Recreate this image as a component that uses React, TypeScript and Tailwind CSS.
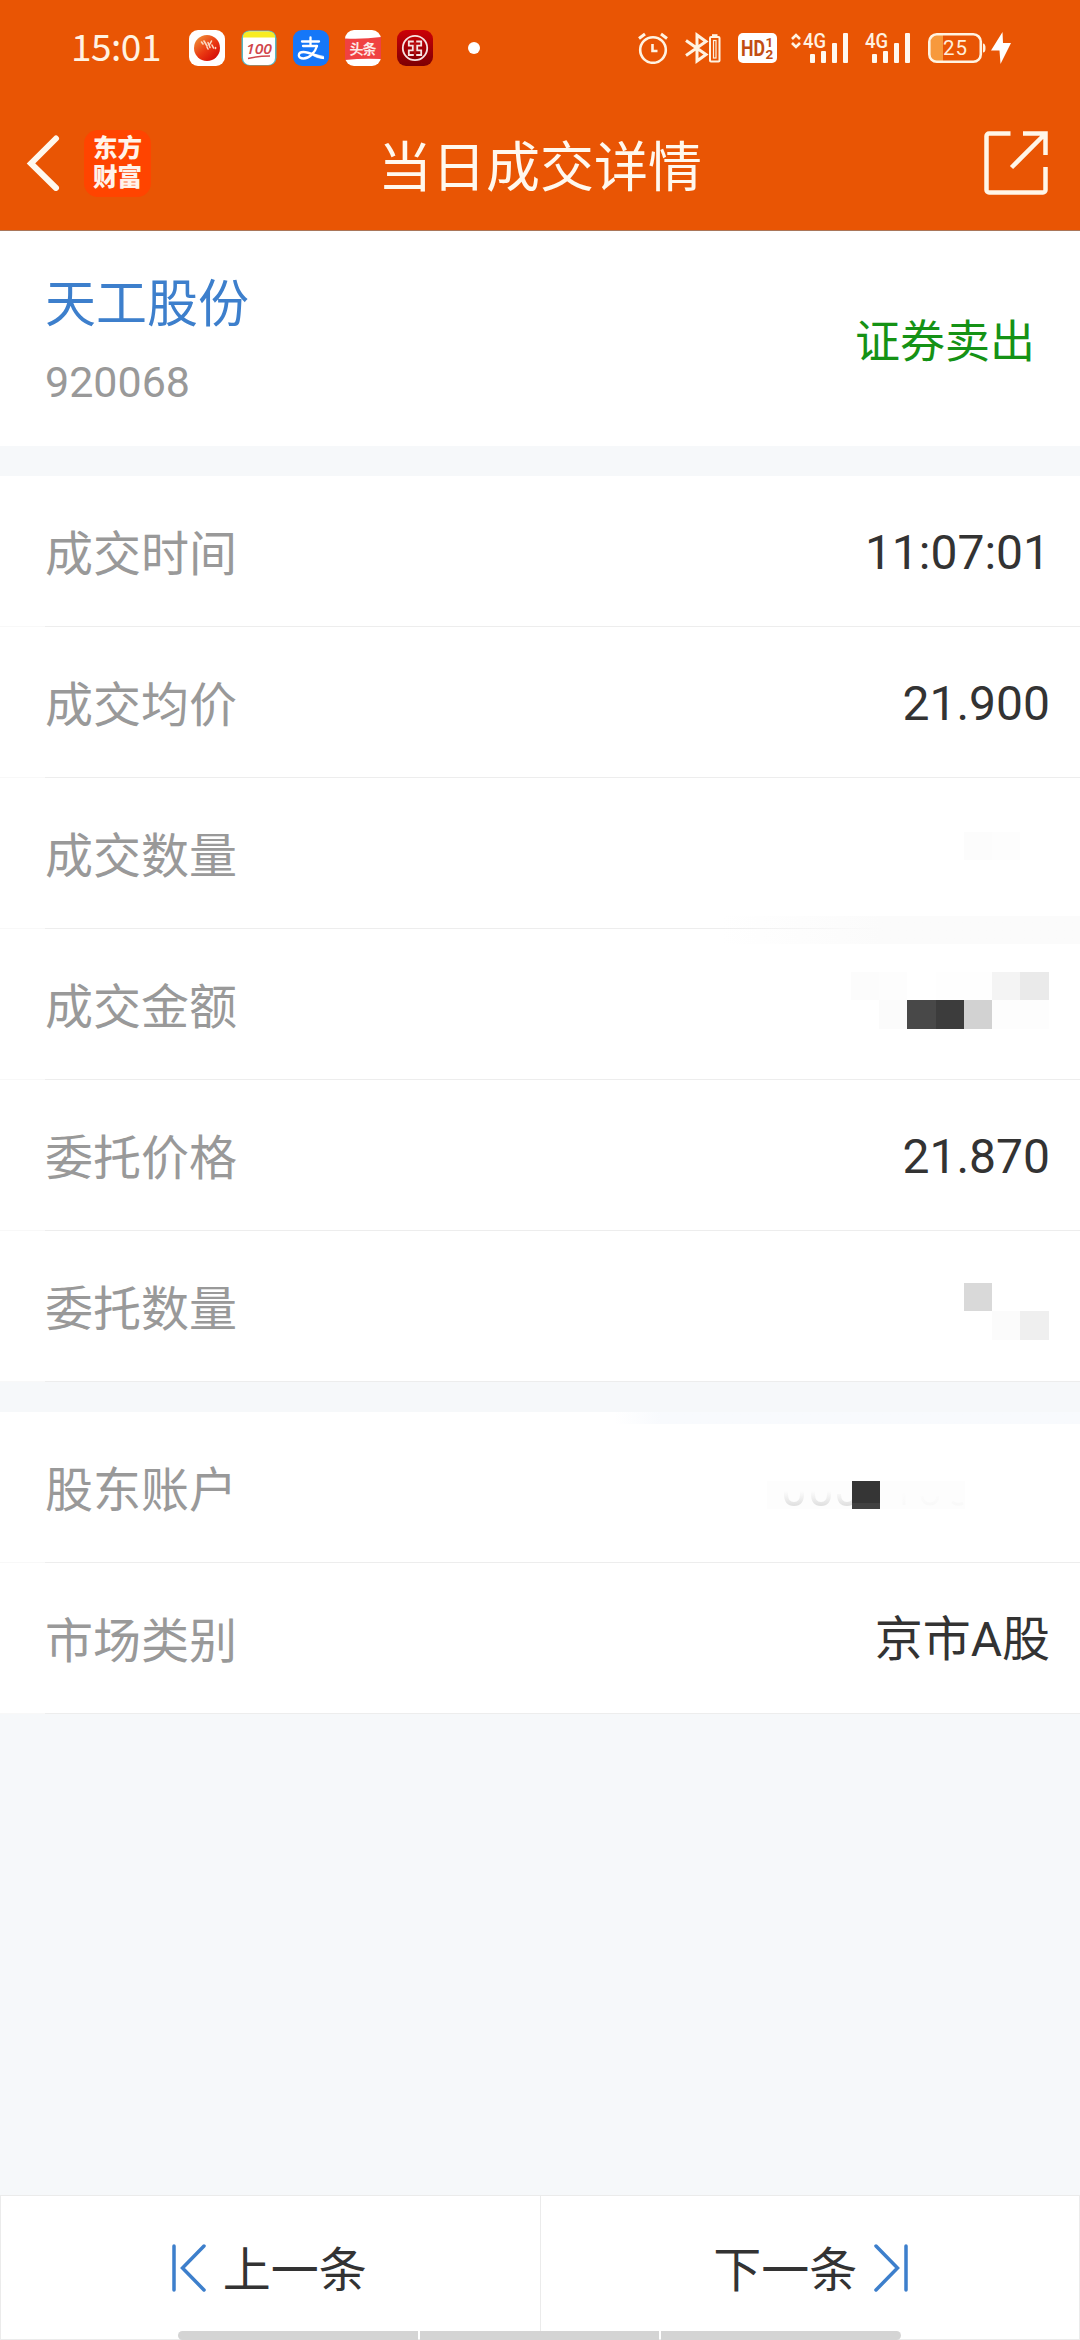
import type { ReactNode } from 'react'

interface Cell {
  x: number
  y: number
  fill: string
}

interface DetailRowProps {
  label: string
  children?: ReactNode
}

function TelegraphIcon() {
  return (
    <svg width="36" height="36" viewBox="0 0 36 36">
      <defs>
        <linearGradient id="ball" x1="0.1" y1="0.1" x2="0.8" y2="0.9">
          <stop offset="0" stopColor="#ef8a35" />
          <stop offset="0.55" stopColor="#ea3a12" />
          <stop offset="1" stopColor="#d60f08" />
        </linearGradient>
      </defs>
      <rect width="36" height="36" rx="9" fill="#fff" />
      <circle cx="18" cy="18" r="13" fill="url(#ball)" />
      <path
        d="M12.500 12l1.500 2M15 11l3 5M19 12.500l2 5M18 17l1 2M22.500 11l-1.500 3M23 15l1.500 3M26.500 17.500v1"
        stroke="#fbd9c0"
        strokeWidth="1.6"
        strokeLinecap="round"
      />
    </svg>
  )
}

function HundredIcon() {
  return (
    <svg width="36" height="36" viewBox="0 0 36 36">
      <rect x="0.5" y="0.5" width="35" height="35" rx="8" fill="#55b8c4" />
      <rect x="2" y="1.5" width="32" height="33.5" rx="7" fill="#fff" />
      <path d="M2 7.5V7a5.500 5.500 0 0 1 5.500-5.500h21A5.500 5.500 0 0 1 34 7v0.500z" fill="#f8ec22" />
      <text
        x="5"
        y="23.500"
        fontSize="15"
        fontStyle="italic"
        fontFamily="Open Sans, sans-serif"
        fontWeight="600"
        textLength="26"
        lengthAdjust="spacingAndGlyphs"
        fill="#d0454b"
      >
        100
      </text>
      <path d="M7 28.500q10-2.500 22-2.500" stroke="#d0454b" strokeWidth="1.400" fill="none" />
    </svg>
  )
}

function AlipayIcon() {
  return (
    <svg width="36" height="36" viewBox="0 0 36 36">
      <rect width="36" height="36" rx="9" fill="#1677f8" />
      <g stroke="#fff" fill="none" strokeLinecap="round">
        <path d="M9 11.500h17M17.500 7.500v8.500M10 16h14" strokeWidth="2.300" />
        <path d="M24 16c-2 7-8 12.500-13.500 12.500-6.500 0-6-6.500 0-6.500 6 0 12 4 19.500 6" strokeWidth="2.300" />
      </g>
      <path d="M21 23.500l10 2.500v3q-6 .500-11-3z" fill="#fff" fillOpacity="0.750" />
    </svg>
  )
}

function ToutiaoIcon() {
  return (
    <svg width="36" height="36" viewBox="0 0 36 36">
      <rect width="36" height="36" rx="9" fill="#fff" />
      <path d="M0 8.500q18 1 36-1.500v22q-18-1-36 1z" fill="#f04142" />
      <text
        x="4.500"
        y="24"
        fontSize="14"
        fontFamily="Noto Sans CJK SC, sans-serif"
        fontWeight="700"
        textLength="27"
        fill="#fde8e6"
      >
        头条
      </text>
    </svg>
  )
}

function BankIcon() {
  return (
    <svg width="36" height="36" viewBox="0 0 36 36">
      <defs>
        <linearGradient id="bank" x1="0" y1="0" x2="0" y2="1">
          <stop offset="0" stopColor="#cc0007" />
          <stop offset="1" stopColor="#7d0004" />
        </linearGradient>
      </defs>
      <rect width="36" height="36" rx="9" fill="url(#bank)" />
      <g stroke="#f7e4e2" fill="none" strokeWidth="1.800">
        <circle cx="18" cy="18" r="12.200" />
        <path d="M16.800 11.500h-5v4.200h4v4.600h-4v4.700h5M19.200 11.500h5v4.200h-4v4.600h4v4.700h-5" />
      </g>
      <path d="M18 12v12.500" stroke="#d9302c" strokeWidth="0.800" />
    </svg>
  )
}

function AlarmIcon() {
  return (
    <svg width="30" height="32" viewBox="0 0 30 32" fill="none" stroke="#fff3e2">
      <circle cx="15" cy="18" r="12.800" strokeWidth="2.600" />
      <path d="M14.500 12v7h5" strokeWidth="2.600" />
      <path d="M1 6.500l6-4.500M29 6.500l-6-4.500" strokeWidth="3" />
    </svg>
  )
}

function BluetoothIcon() {
  return (
    <svg width="36" height="32" viewBox="0 0 36 32" fill="none" stroke="#fff3e2">
      <path d="M1 8.500l20 14-9 6.500V3l9 6.500-20 14" strokeWidth="3" />
      <rect x="25" y="5" width="9.500" height="24.500" rx="1" strokeWidth="2" />
      <path d="M27 3.200h5.500" strokeWidth="2" />
      <rect x="28.500" y="8.500" width="2.500" height="17.500" strokeWidth="1.200" />
    </svg>
  )
}

function HdIcon() {
  return (
    <svg width="39" height="30" viewBox="0 0 39 30" fontFamily="Roboto, sans-serif" fontWeight="700" fill="#c24d12">
      <rect width="39" height="30" rx="5" fill="#fff" />
      <text x="3" y="23" fontSize="22" textLength="24" lengthAdjust="spacingAndGlyphs">
        HD
      </text>
      <text x="27.500" y="14" fontSize="13.500">
        1
      </text>
      <text x="27.500" y="25.500" fontSize="13.500">
        2
      </text>
    </svg>
  )
}

function SignalIcon({ arrows }: { arrows?: boolean }) {
  return (
    <svg width="58" height="32" viewBox="0 0 58 32" className="overflow-visible">
      {arrows && (
        <path d="M2 7l4-4 4 4M2 11l4 4 4-4" stroke="#fff3e2" strokeWidth="2.600" fill="none" />
      )}
      <text
        x="13"
        y="15.500"
        fontSize="20"
        fontFamily="Roboto, sans-serif"
        fontWeight="500"
        textLength="23"
        lengthAdjust="spacingAndGlyphs"
        fill="#fff3e2"
      >
        4G
      </text>
      <g fill="#fff8f0">
        <rect x="20" y="22" width="5" height="9" rx="1" />
        <rect x="31" y="19" width="5" height="12" rx="1" />
        <rect x="42" y="11" width="5" height="20" rx="1" />
        <rect x="53" y="1" width="5" height="30" rx="1" />
      </g>
    </svg>
  )
}

function BatteryIcon() {
  return (
    <svg width="84" height="32" viewBox="0 0 84 32">
      <path d="M15 3v26h-6a7 7 0 0 1-7-7V10a7 7 0 0 1 7-7z" fill="#f7993c" />
      <rect x="1.300" y="2.300" width="51.500" height="27.500" rx="7.500" fill="none" stroke="#fff3e2" strokeWidth="2.600" />
      <path d="M55 11.500q2.500 0 2.500 4.500t-2.500 4.500z" fill="#fff3e2" />
      <text x="15" y="23" fontSize="20.500" fontFamily="Roboto, sans-serif" textLength="24" fill="#ffeeda">
        25
      </text>
      <path d="M74.500 0L63 18.500h8.500L72.500 32 83 11h-8z" fill="#fff" />
    </svg>
  )
}

function StatusBar() {
  return (
    <div className="flex h-24 items-center pl-[71px] pr-[68px]">
      <span className="mb-[5px] w-[118px] font-['Noto_Sans_CJK_SC',sans-serif] text-[37px] leading-none tracking-[-0.5px] text-[#fff3e2]">
        15:01
      </span>
      <div className="flex gap-4">
        <TelegraphIcon />
        <HundredIcon />
        <AlipayIcon />
        <ToutiaoIcon />
        <BankIcon />
      </div>
      <span className="ml-[35px] h-3 w-3 rounded-full bg-white" />
      <div className="ml-auto flex items-center">
        <AlarmIcon />
        <div className="ml-[17px]">
          <BluetoothIcon />
        </div>
        <div className="ml-[17px]">
          <HdIcon />
        </div>
        <div className="ml-[13px]">
          <SignalIcon arrows />
        </div>
        <div className="ml-1">
          <SignalIcon />
        </div>
        <div className="ml-[18px]">
          <BatteryIcon />
        </div>
      </div>
    </div>
  )
}

function TitleBar() {
  return (
    <div className="flex h-[134px] items-center justify-between pl-[26px] pr-8">
      <div className="flex w-[134px] items-center gap-6">
        <svg width="34" height="56" viewBox="0 0 34 56" fill="none" className="shrink-0">
          <path d="M30 3.500L5 28.500l25 24.500" stroke="#fff8ee" strokeWidth="6" strokeLinecap="round" />
        </svg>
        <div className="flex h-[67px] w-[67px] shrink-0 flex-col items-center justify-center rounded-[14px] bg-[#ff4400] pb-1 text-[24.5px] font-black leading-[29px] text-[#fff3ea]">
          <span>东方</span>
          <span>财富</span>
        </div>
      </div>
      <h1 className="mt-0.5 text-[54px] leading-none text-[#fff8ee]">当日成交详情</h1>
      <div className="flex w-32 justify-end">
        <svg width="64" height="64" viewBox="0 0 64 64" fill="none" stroke="#fff6e8" strokeWidth="4.500">
          <path d="M26.500 2.500H5a2.500 2.500 0 0 0-2.500 2.500v54A2.500 2.500 0 0 0 5 61.500h54a2.500 2.500 0 0 0 2.500-2.500V36" />
          <path d="M39 2.500h22.500V24M61 3L27.500 36.500" />
        </svg>
      </div>
    </div>
  )
}

function DetailRow({ label, children }: DetailRowProps) {
  return (
    <div className="flex h-[151px] bg-white">
      <div className="w-[45px] border-b border-[#f8f8f8]" />
      <div className="flex flex-1 items-center justify-between border-b border-[#ededed] pr-[31px]">
        <span className="mb-[3px] text-[48px] leading-none text-[#999999]">{label}</span>
        {children}
      </div>
    </div>
  )
}

function Value({ children }: { children: ReactNode }) {
  return (
    <span className="mt-[3px] mr-[-1px] font-[Roboto,'Noto_Sans_CJK_SC',sans-serif] text-[48px] leading-none text-[#333333]">
      {children}
    </span>
  )
}

// Pixelated cover over a private amount, 7 columns by 2 rows
function Mosaic({ cells }: { cells: Cell[] }) {
  return (
    <svg width="198" height="57" viewBox="0 0 198 57" shapeRendering="crispEdges">
      {cells.map((cell) => (
        <rect
          key={`${cell.x}-${cell.y}`}
          x={cell.x}
          y={cell.y}
          width={cell.x === 169 ? 29 : cell.x === 56 ? 29 : 28}
          height={cell.y === 0 ? 28 : 29}
          fill={cell.fill}
        />
      ))}
    </svg>
  )
}

const amountCells: Cell[] = [
  { x: 0, y: 0, fill: '#fcfcfc' },
  { x: 28, y: 0, fill: '#fdfdfd' },
  { x: 85, y: 0, fill: '#fefefe' },
  { x: 113, y: 0, fill: '#fefefe' },
  { x: 141, y: 0, fill: '#f4f4f4' },
  { x: 169, y: 0, fill: '#eaeaea' },
  { x: 28, y: 28, fill: '#fbfbfb' },
  { x: 56, y: 28, fill: '#484848' },
  { x: 85, y: 28, fill: '#3c3c3c' },
  { x: 113, y: 28, fill: '#d2d2d2' },
  { x: 141, y: 28, fill: '#fdfdfd' },
  { x: 169, y: 28, fill: '#fdfdfd' },
]

const volumeCells: Cell[] = [
  { x: 113, y: 0, fill: '#fcfcfc' },
  { x: 141, y: 0, fill: '#fdfdfd' },
]

const orderCells: Cell[] = [
  { x: 113, y: 0, fill: '#d9d9d9' },
  { x: 141, y: 28, fill: '#fbfbfb' },
  { x: 169, y: 28, fill: '#efefef' },
]

function AccountMask() {
  return (
    <svg width="283" height="28" viewBox="0 0 283 28">
      <defs>
        <linearGradient id="fade" gradientUnits="userSpaceOnUse" x1="0" y1="10" x2="0" y2="26">
          <stop offset="0" stopColor="#e0e0e0" stopOpacity="0" />
          <stop offset="1" stopColor="#dcdcdc" />
        </linearGradient>
      </defs>
      <rect width="198" height="28" fill="#fdfdfd" />
      <g stroke="url(#fade)" strokeWidth="4" fill="none">
        <path d="M19 9v4q0 10 8 10t8-10V9M46 9v4q0 10 8 10t8-10V9M72 13q0 10 8 10t8-10V9" />
      </g>
      <g stroke="url(#fade)" strokeWidth="3" fill="none" opacity="0.150">
        <path d="M137 12v12M155 15q1 8 8 8t8-8M185 21q6 4 11 1" />
      </g>
      <rect x="85" width="28" height="28" fill="#353535" />
      <rect x="85" y="22" width="28" height="6" fill="#414141" />
    </svg>
  )
}

export default function App() {
  return (
    <div className="flex h-[2340px] w-[1080px] flex-col overflow-hidden bg-[#f6f8fa] font-['Noto_Sans_CJK_SC',sans-serif]">
      <header className="h-[231px] shrink-0 border-b border-[#a9765a] bg-[#e95504]">
        <StatusBar />
        <TitleBar />
      </header>

      <section className="flex h-[215px] shrink-0 items-center justify-between bg-white pl-[45px] pr-[45px]">
        <div className="flex flex-col pt-1">
          <span className="text-[51px] leading-[60px] text-[#3d7fcc]">天工股份</span>
          <span className="mt-[23px] font-[Roboto,sans-serif] text-[43px] leading-[58px] text-[#999999]">920068</span>
        </div>
        <span className="text-[45px] leading-none text-[#159215]">证券卖出</span>
      </section>

      <section className="relative mt-[30px] shrink-0">
        <DetailRow label="成交时间">
          <Value>11:07:01</Value>
        </DetailRow>
        <DetailRow label="成交均价">
          <Value>21.900</Value>
        </DetailRow>
        <DetailRow label="成交数量">
          <div className="mt-[15px]">
            <Mosaic cells={volumeCells} />
          </div>
        </DetailRow>
        <DetailRow label="成交金额">
          <div className="-mt-[7px]">
            <Mosaic cells={amountCells} />
          </div>
        </DetailRow>
        <DetailRow label="委托价格">
          <Value>21.870</Value>
        </DetailRow>
        <DetailRow label="委托数量">
          <div className="mt-[11px]">
            <Mosaic cells={orderCells} />
          </div>
        </DetailRow>
        {/* smear that hides the divider under the volume */}
        <div className="absolute right-0 top-[440px] h-7 w-[360px] bg-linear-to-r from-[#fbfbfb]/0 to-[#fbfbfb] to-45%" />
      </section>

      <section className="relative mt-[30px] shrink-0">
        <DetailRow label="股东账户">
          <div className="mt-[15px] mr-[-1px]">
            <AccountMask />
          </div>
        </DetailRow>
        <DetailRow label="市场类别">
          <Value>京市A股</Value>
        </DetailRow>
        <div className="absolute right-0 top-0 h-3 w-[466px] bg-linear-to-r from-[#f8fafd]/0 to-[#f8fafd] to-10%" />
      </section>

      <footer className="relative mt-auto flex h-[145px] shrink-0 border border-[#ebebeb] bg-white text-[48px] text-[#333333]">
        <div className="flex flex-1 items-center justify-center gap-4 border-r border-[#ebebeb] pr-0.5">
          <svg width="35" height="48" viewBox="0 0 35 48" fill="none" stroke="#3d7fcc" strokeWidth="3.500" strokeLinecap="round">
            <path d="M2 2v44M32 2L10.500 24 32 46" />
          </svg>
          <span className="mb-[3px] leading-none">上一条</span>
        </div>
        <div className="flex flex-1 items-center justify-center gap-4 pl-0.5">
          <span className="mb-[3px] leading-none">下一条</span>
          <svg width="35" height="48" viewBox="0 0 35 48" fill="none" stroke="#3d7fcc" strokeWidth="3.500" strokeLinecap="round">
            <path d="M33 2v44M3 2l21.500 22L3 46" />
          </svg>
        </div>
        <div className="absolute bottom-[-1px] left-[177px] flex h-[9px] w-[723px] gap-0.5 overflow-hidden rounded-[5px]">
          <div className="flex-1 bg-[#d4d4d4]" />
          <div className="flex-1 bg-[#d4d4d4]" />
          <div className="flex-1 bg-[#d4d4d4]" />
        </div>
      </footer>
    </div>
  )
}
